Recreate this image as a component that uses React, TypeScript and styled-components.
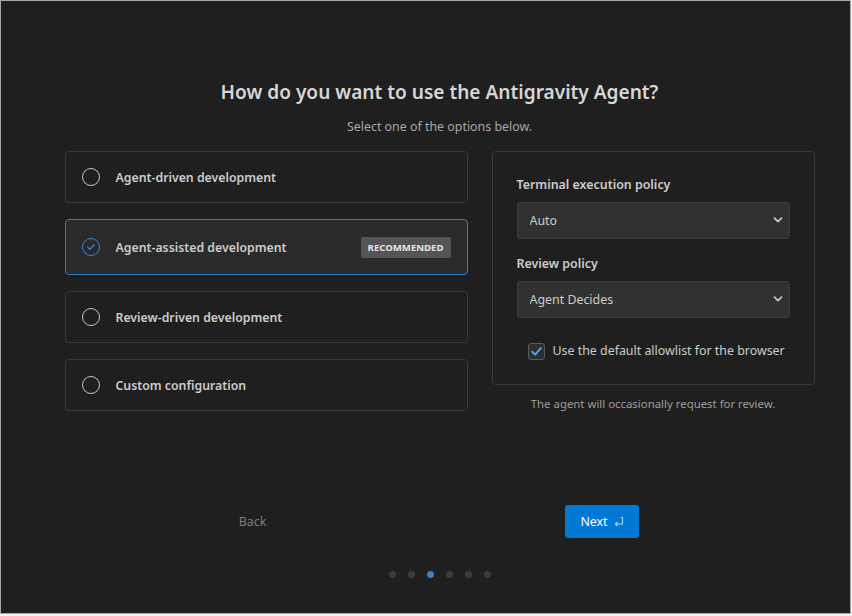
import styled, { createGlobalStyle } from 'styled-components';

const GlobalStyle = createGlobalStyle`
  * { box-sizing: border-box; }
  body {
    margin: 0;
    background: #f3f3f3;
    font-family: "Segoe UI", "Noto Sans", "Open Sans", sans-serif;
  }
`;

const options = [
  { id: 'driven', label: 'Agent-driven development' },
  { id: 'assisted', label: 'Agent-assisted development', badge: 'RECOMMENDED' },
  { id: 'review', label: 'Review-driven development' },
  { id: 'custom', label: 'Custom configuration' },
];

const selectedId = 'assisted';
const steps = 6;
const currentStep = 2;

const Chevron = () => (
  <svg width="12" height="12" viewBox="0 0 12 12">
    <path d="M2.5 4.2 L6 7.6 L9.5 4.2" fill="none" stroke="#cccccc" strokeWidth="1.7" strokeLinecap="round" strokeLinejoin="round" />
  </svg>
);

const ReturnIcon = () => (
  <svg width="11" height="11" viewBox="0 0 11 11">
    <path d="M7.5 1.5 H9.5 V8 H2.5 M4.5 6 L2.5 8 L4.5 10" fill="none" stroke="#a9d3f7" strokeWidth="1.1" strokeLinejoin="round" />
  </svg>
);

const App = () => {
  return (
    <>
      <GlobalStyle />
      <Window>
        <Title>How do you want to use the Antigravity Agent?</Title>
        <Subtitle>Select one of the options below.</Subtitle>
        <Columns>
          <OptionList>
            {options.map((opt) => {
              const active = opt.id === selectedId;
              return (
                <OptionCard key={opt.id} $active={active} $tall={!!opt.badge}>
                  <Radio $active={active}>
                    {active && (
                      <svg width="10" height="10" viewBox="0 0 10 10">
                        <path d="M1.8 5.2 L4 7.3 L8.2 2.8" fill="none" stroke="#2f86d6" strokeWidth="1.3" strokeLinecap="round" strokeLinejoin="round" />
                      </svg>
                    )}
                  </Radio>
                  <OptionLabel>{opt.label}</OptionLabel>
                  {opt.badge && <Badge>{opt.badge}</Badge>}
                </OptionCard>
              );
            })}
          </OptionList>
          <SideColumn>
            <SettingsPanel>
              <FieldLabel>Terminal execution policy</FieldLabel>
              <SelectWrap>
                <Select defaultValue="auto">
                  <option value="auto">Auto</option>
                  <option value="off">Off</option>
                  <option value="turbo">Turbo</option>
                </Select>
                <SelectArrow>
                  <Chevron />
                </SelectArrow>
              </SelectWrap>
              <FieldLabel $spaced>Review policy</FieldLabel>
              <SelectWrap>
                <Select defaultValue="decides">
                  <option value="decides">Agent Decides</option>
                  <option value="always">Always Proceed</option>
                  <option value="request">Request Review</option>
                </Select>
                <SelectArrow>
                  <Chevron />
                </SelectArrow>
              </SelectWrap>
              <CheckRow>
                <CheckBox>
                  <svg width="13" height="13" viewBox="0 0 13 13">
                    <path d="M2.2 6.8 L5.2 9.6 L10.8 3.2" fill="none" stroke="#4aa3ef" strokeWidth="2" strokeLinecap="round" strokeLinejoin="round" />
                  </svg>
                </CheckBox>
                <CheckText>Use the default allowlist for the browser</CheckText>
              </CheckRow>
            </SettingsPanel>
            <Note>The agent will occasionally request for review.</Note>
          </SideColumn>
        </Columns>
        <ButtonRow>
          <BackButton>Back</BackButton>
          <NextButton>
            Next <ReturnIcon />
          </NextButton>
        </ButtonRow>
        <Dots>
          {Array.from({ length: steps }).map((_, i) => (
            <Dot key={i} $active={i === currentStep} />
          ))}
        </Dots>
      </Window>
    </>
  );
};

const Window = styled.div`
  width: 851px;
  height: 614px;
  border: 1px solid #a8a8a8;
  background: #1f1f1f;
  display: flex;
  flex-direction: column;
  align-items: center;
  padding: 77px 36px 0 64px;
`;

const Title = styled.h1`
  margin: 0;
  font-size: 19.1px;
  line-height: 28px;
  font-weight: 600;
  color: #d6d6d6;
`;

const Subtitle = styled.p`
  margin: 12px 0 0;
  font-size: 12.4px;
  line-height: 18px;
  color: #a6a6a6;
`;

const Columns = styled.div`
  margin-top: 15px;
  width: 750px;
  display: grid;
  grid-template-columns: 403px 323px;
  gap: 24px;
`;

const OptionList = styled.div`
  display: flex;
  flex-direction: column;
  gap: 16px;
`;

const OptionCard = styled.div<{ $active: boolean; $tall: boolean }>`
  height: ${({ $tall }) => ($tall ? 56 : 52)}px;
  display: flex;
  align-items: center;
  gap: 16px;
  padding: 0 16px;
  border-radius: 4px;
  border: 1px solid ${({ $active }) => ($active ? '#2b7fc6' : '#3a3a3a')};
  background: ${({ $active }) => ($active ? '#2a2a2a' : '#1f1f1f')};
  cursor: pointer;
`;

const Radio = styled.span<{ $active: boolean }>`
  width: 18px;
  height: 18px;
  flex: none;
  border-radius: 50%;
  border: 1.5px solid ${({ $active }) => ($active ? '#2f86d6' : '#c6c6c6')};
  display: flex;
  align-items: center;
  justify-content: center;
`;

const OptionLabel = styled.span`
  flex: 1;
  font-size: 12.3px;
  font-weight: 600;
  color: #cccccc;
`;

const Badge = styled.span`
  height: 21px;
  padding: 0 7px;
  display: flex;
  align-items: center;
  border-radius: 2px;
  background: #555555;
  color: #e6e6e6;
  font-size: 9.6px;
  font-weight: 700;
`;

const SideColumn = styled.div`
  display: flex;
  flex-direction: column;
  align-items: stretch;
`;

const SettingsPanel = styled.div`
  border: 1px solid #3a3a3a;
  border-radius: 4px;
  padding: 24px 24px 24px;
  display: flex;
  flex-direction: column;
`;

const FieldLabel = styled.label<{ $spaced?: boolean }>`
  font-size: 12.4px;
  line-height: 18px;
  font-weight: 600;
  color: #cccccc;
  margin: ${({ $spaced }) => ($spaced ? '16px' : '0')} 0 8px;
`;

const SelectWrap = styled.div`
  position: relative;
`;

const Select = styled.select`
  width: 100%;
  height: 37px;
  appearance: none;
  background: #313131;
  border: 1px solid #3c3c3c;
  border-radius: 3px;
  padding: 0 12px;
  color: #cccccc;
  font-family: inherit;
  font-size: 12.4px;
  outline: none;
`;

const SelectArrow = styled.span`
  position: absolute;
  right: 6px;
  top: 12px;
  pointer-events: none;
  display: flex;
`;

const CheckRow = styled.div`
  margin: 24px 0 0 11px;
  display: flex;
  align-items: center;
  gap: 8px;
  white-space: nowrap;
`;

const CheckBox = styled.span`
  width: 17px;
  height: 17px;
  flex: none;
  border-radius: 3px;
  border: 1px solid #5a5a5a;
  background: #2e2e2e;
  display: flex;
  align-items: center;
  justify-content: center;
`;

const CheckText = styled.span`
  font-size: 12.4px;
  line-height: 18px;
  color: #cccccc;
`;

const Note = styled.p`
  margin: 11px 0 0;
  text-align: center;
  font-size: 11.4px;
  line-height: 16px;
  color: #9d9d9d;
`;

const ButtonRow = styled.div`
  margin-top: 93px;
  width: 750px;
  padding-right: 24px;
  display: flex;
  justify-content: center;
  gap: 276px;
`;

const BackButton = styled.button`
  width: 73px;
  height: 33px;
  background: transparent;
  border: none;
  color: #7c7c7c;
  font-family: inherit;
  font-size: 12.4px;
  cursor: pointer;
`;

const NextButton = styled.button`
  width: 74px;
  height: 33px;
  background: #0078d4;
  border: none;
  border-radius: 3px;
  color: #ffffff;
  font-family: inherit;
  font-size: 12.4px;
  display: flex;
  align-items: center;
  justify-content: center;
  gap: 5px;
  cursor: pointer;
`;

const Dots = styled.div`
  margin-top: 33px;
  display: flex;
  gap: 12px;
`;

const Dot = styled.span<{ $active: boolean }>`
  width: 7px;
  height: 7px;
  border-radius: 50%;
  background: ${({ $active }) => ($active ? '#3d7fc0' : '#3c3c3c')};
`;

export default App;
